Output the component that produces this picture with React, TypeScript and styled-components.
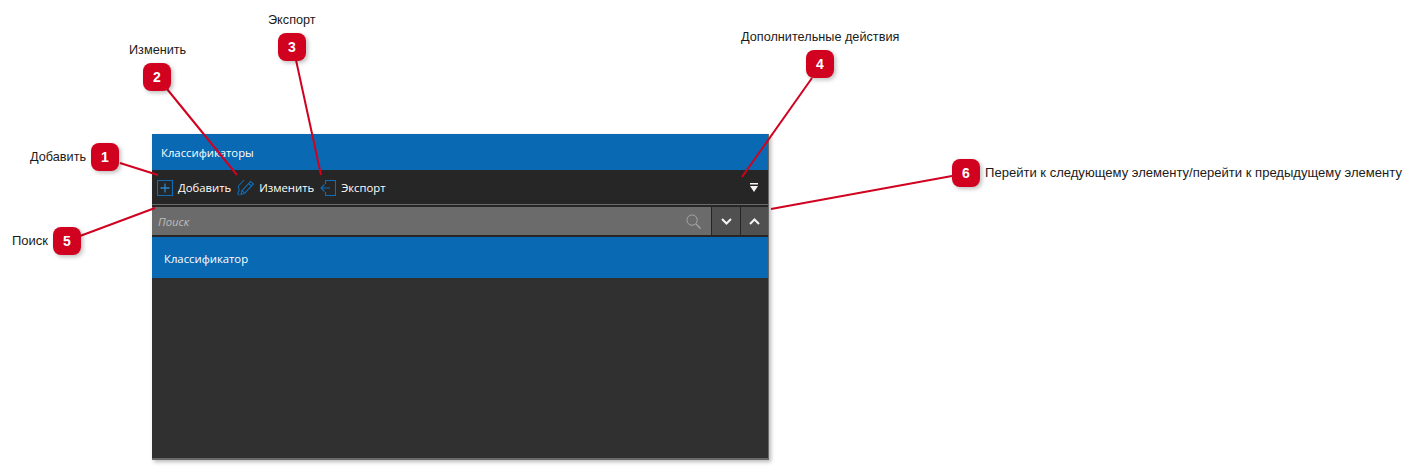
import React from 'react';
import styled, { createGlobalStyle } from 'styled-components';

const GlobalStyle = createGlobalStyle`
  html, body {
    margin: 0;
    padding: 0;
    background: #fff;
  }
`;

const Canvas = styled.div`
  position: relative;
  width: 1418px;
  height: 469px;
  overflow: hidden;
  padding: 134px 0 0 152px;
  box-sizing: border-box;
`;

const Window = styled.div`
  width: 616px;
  height: 326px;
  display: flex;
  flex-direction: column;
  background: #303030;
  border-right: 1px solid #6a6a6a;
  box-shadow: 2px 2px 4px rgba(0, 0, 0, 0.28);
  font-family: 'Open Sans', 'Noto Sans', sans-serif;
  font-size: 11.3px;
  color: #fff;
`;

const TitleBar = styled.div`
  height: 36px;
  flex: none;
  display: flex;
  align-items: center;
  padding: 0 9px;
  background: #0969b3;
`;

const Toolbar = styled.div`
  height: 34px;
  flex: none;
  display: flex;
  align-items: center;
  padding: 0 5px;
  background: #262626;
  border-bottom: 1px solid #6a6a6a;
  box-sizing: content-box;
`;

const ToolButton = styled.div`
  display: flex;
  align-items: center;
  gap: 5px;
  margin-right: 6px;
  padding-top: 1px;
`;

const MoreButton = styled.div`
  margin-left: auto;
  margin-right: 5px;
  display: flex;
`;

const SearchRow = styled.div`
  height: 28px;
  flex: none;
  display: flex;
  gap: 1px;
  background: #262626;
  padding: 2px 0;
`;

const SearchField = styled.div`
  flex: 1;
  display: flex;
  align-items: center;
  justify-content: space-between;
  padding: 0 10px 0 6px;
  background: #6b6b6b;
  font-style: italic;
  color: #bdbdbd;
`;

const StepButton = styled.div<{ $width: number }>`
  width: ${(p) => p.$width}px;
  display: flex;
  align-items: center;
  justify-content: center;
  background: #505050;
`;

const ListItem = styled.div`
  height: 41px;
  flex: none;
  display: flex;
  align-items: center;
  padding: 1px 12px 0;
  box-sizing: border-box;
  background: #0969b3;
`;

const ListBody = styled.div`
  flex: 1;
  border-bottom: 2px solid #6a6a6a;
`;

const Leaders = styled.svg`
  position: absolute;
  left: 0;
  top: 0;
  pointer-events: none;
`;

const Badge = styled.div<{ $x: number; $y: number }>`
  position: absolute;
  left: ${(p) => p.$x}px;
  top: ${(p) => p.$y}px;
  width: 28px;
  height: 28px;
  border-radius: 8px;
  background: #d0021f;
  box-shadow: 2px 2px 4px rgba(0, 0, 0, 0.25);
  display: flex;
  align-items: center;
  justify-content: center;
  color: #fff;
  font-family: 'Liberation Sans', Arial, sans-serif;
  font-size: 14px;
  font-weight: 700;
`;

const Label = styled.div<{ $x: number; $y: number; $size: number }>`
  position: absolute;
  left: ${(p) => p.$x}px;
  top: ${(p) => p.$y}px;
  color: #1a1a1a;
  font-family: 'Liberation Sans', Arial, sans-serif;
  font-size: ${(p) => p.$size}px;
  line-height: 14px;
  white-space: nowrap;
`;

const AddIcon = () => (
  <svg width="16" height="16" viewBox="0 0 16 16" fill="none" stroke="#0f6cb5" strokeWidth="1.1">
    <rect x="0.5" y="0.5" width="15" height="15" />
    <path d="M8 3.5v9M3.5 8h9" stroke="#2a86cc" strokeWidth="1.3" />
  </svg>
);

const EditIcon = () => (
  <svg width="17" height="17" viewBox="0 0 17 17" fill="none" stroke="#0f6cb5" strokeWidth="1.1">
    <path d="M13.5 2.5l3 2.5-9 9.5-3.5 1 .8-3.7z" />
    <path d="M11.5 4.5l3 2.5M5 11.5l2.4 2.4" />
    <path d="M7 1L1.5 7c-1.3 1.6 1.2 2.5.6 4.2L1 14c-.4 1.2.2 2 1.5 2" />
  </svg>
);

const ExportIcon = () => (
  <svg width="16" height="16" viewBox="0 0 16 16" fill="none" stroke="#0f6cb5" strokeWidth="1.1">
    <path d="M5.5 4V0.5h10v15h-10V12" />
    <path d="M10 8H0.8M4.5 4.5L1 8l3.5 3.5" />
  </svg>
);

const SearchIcon = () => (
  <svg width="15" height="15" viewBox="0 0 16 16" fill="none" stroke="#a8a8a8" strokeWidth="1">
    <circle cx="6.5" cy="6.5" r="5.5" />
    <path d="M10.5 10.5l5 5" strokeWidth="1.4" />
  </svg>
);

const Chevron = ({ up }: { up?: boolean }) => (
  <svg width="11" height="7" viewBox="0 0 11 7" fill="none" stroke="#f4f4f4" strokeWidth="2">
    <path d={up ? 'M1 6l4.5-4.5L10 6' : 'M1 1l4.5 4.5L10 1'} />
  </svg>
);

const MoreIcon = () => (
  <svg width="8" height="9" viewBox="0 0 8 9" fill="#f4f4f4">
    <rect x="0" y="0" width="8" height="1.5" />
    <path d="M0 3h8L4 9z" />
  </svg>
);

const leaders = [
  [120, 163, 158, 175],
  [167, 89, 237, 175],
  [296, 60, 321, 175],
  [812, 78, 742, 177],
  [80, 236, 155, 208],
  [952, 176, 771, 209],
];

const badges = [
  { n: 1, x: 91, y: 143 },
  { n: 2, x: 143, y: 63 },
  { n: 3, x: 278, y: 33 },
  { n: 4, x: 806, y: 50 },
  { n: 5, x: 53, y: 227 },
  { n: 6, x: 952, y: 159 },
];

const labels = [
  { text: 'Добавить', x: 30, y: 150, size: 12.7 },
  { text: 'Изменить', x: 129, y: 43, size: 12.7 },
  { text: 'Экспорт', x: 268, y: 13, size: 12.7 },
  { text: 'Дополнительные действия', x: 741, y: 30, size: 12.7 },
  { text: 'Поиск', x: 12, y: 234, size: 13 },
  { text: 'Перейти к следующему элементу/перейти к предыдущему элементу', x: 985, y: 166, size: 13.06 },
];

export default function App() {
  return (
    <Canvas>
      <GlobalStyle />
      <Window>
        <TitleBar>Классификаторы</TitleBar>
        <Toolbar>
          <ToolButton>
            <AddIcon />
            Добавить
          </ToolButton>
          <ToolButton>
            <EditIcon />
            Изменить
          </ToolButton>
          <ToolButton>
            <ExportIcon />
            Экспорт
          </ToolButton>
          <MoreButton>
            <MoreIcon />
          </MoreButton>
        </Toolbar>
        <SearchRow>
          <SearchField>
            Поиск
            <SearchIcon />
          </SearchField>
          <StepButton $width={28}>
            <Chevron />
          </StepButton>
          <StepButton $width={27}>
            <Chevron up />
          </StepButton>
        </SearchRow>
        <ListItem>Классификатор</ListItem>
        <ListBody />
      </Window>
      <Leaders width="1418" height="469">
        {leaders.map(([x1, y1, x2, y2]) => (
          <line key={`${x1}-${y1}`} x1={x1} y1={y1} x2={x2} y2={y2} stroke="#d0021f" strokeWidth="2" />
        ))}
      </Leaders>
      {badges.map((b) => (
        <Badge key={b.n} $x={b.x} $y={b.y}>
          {b.n}
        </Badge>
      ))}
      {labels.map((l) => (
        <Label key={l.text} $x={l.x} $y={l.y} $size={l.size}>
          {l.text}
        </Label>
      ))}
    </Canvas>
  );
}
